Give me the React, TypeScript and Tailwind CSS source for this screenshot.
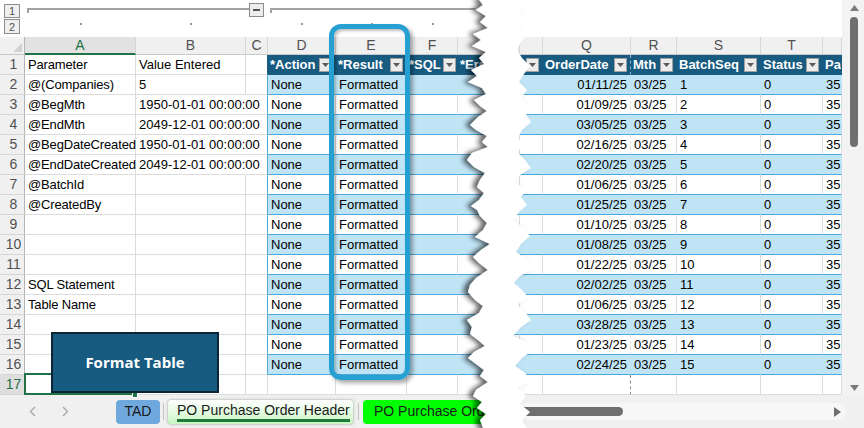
import clsx from "clsx";

type Col = { key: string; w: string; letter: string; dot?: boolean };

const cols: Col[] = [
  { key: "A", w: "w-[111px]", letter: "A", dot: true },
  { key: "B", w: "w-[110px]", letter: "B", dot: true },
  { key: "C", w: "w-[22px]", letter: "C" },
  { key: "D", w: "w-[68px]", letter: "D", dot: true },
  { key: "E", w: "w-[71px]", letter: "E", dot: true },
  { key: "F", w: "w-[51px]", letter: "F", dot: true },
  { key: "G", w: "w-[62px]", letter: "" },
  { key: "P", w: "w-[23px]", letter: "" },
  { key: "Q", w: "w-[88px]", letter: "Q" },
  { key: "R", w: "w-[46px]", letter: "R" },
  { key: "S", w: "w-[84px]", letter: "S" },
  { key: "T", w: "w-[62px]", letter: "T" },
  { key: "U", w: "w-[19px]", letter: "" },
];

const tableKeys = ["D", "E", "F", "G", "P", "Q", "R", "S", "T", "U"];

const headers: Record<string, string> = {
  D: "*Action",
  E: "*Result",
  F: "*SQL",
  G: "*Error",
  P: "i",
  Q: "OrderDate",
  R: "Mth",
  S: "BatchSeq",
  T: "Status",
  U: "Pa",
};

const paramNames = [
  "Parameter",
  "@(Companies)",
  "@BegMth",
  "@EndMth",
  "@BegDateCreated",
  "@EndDateCreated",
  "@BatchId",
  "@CreatedBy",
  "",
  "",
  "",
  "SQL Statement",
  "Table Name",
];

const paramValues = [
  "Value Entered",
  "5",
  "1950-01-01 00:00:00",
  "2049-12-01 00:00:00",
  "1950-01-01 00:00:00",
  "2049-12-01 00:00:00",
];

const orderDates = [
  "01/11/25", "01/09/25", "03/05/25", "02/16/25", "02/20/25",
  "01/06/25", "01/25/25", "01/10/25", "01/08/25", "01/22/25",
  "02/02/25", "01/06/25", "03/28/25", "01/23/25", "02/24/25",
];

// jagged "torn paper" edge, absolute page coords
const tornLeft: [number, number][] = [
  [478, -2], [483, 5], [476, 10], [486, 16], [480, 22], [488, 28], [473, 34], [481, 40],
  [472, 46], [486, 52], [479, 58], [484, 64], [471, 70], [477, 76], [468, 82], [482, 88],
  [486, 94], [474, 100], [480, 106], [487, 111], [478, 117], [470, 125], [476, 130],
  [487, 136], [482, 142], [488, 147], [472, 153], [467, 160], [474, 167], [485, 173],
  [480, 180], [477, 187], [484, 193], [479, 200], [471, 206], [477, 210], [480, 216],
  [487, 223], [483, 230], [475, 237], [490, 244], [481, 250], [473, 257], [479, 263],
  [488, 270], [476, 278], [470, 285], [468, 292], [475, 300], [483, 306], [479, 313],
  [467, 320], [472, 327], [470, 334], [478, 340], [485, 346], [474, 352], [468, 358],
  [476, 364], [484, 370], [480, 376], [488, 382], [476, 390], [473, 396], [482, 402],
  [477, 408], [486, 414], [480, 420], [484, 430],
];
const tornRight: [number, number][] = [
  [528, 430], [522, 420], [530, 412], [520, 404], [526, 396], [519, 388], [531, 380],
  [524, 372], [515, 366], [522, 358], [533, 350], [527, 342], [513, 336], [520, 328],
  [531, 320], [525, 312], [517, 305], [528, 297], [522, 290], [514, 283], [520, 276],
  [535, 268], [528, 260], [516, 252], [521, 244], [530, 236], [524, 228], [513, 220],
  [519, 212], [527, 205], [521, 197], [526, 190], [515, 182], [520, 175], [531, 168],
  [525, 160], [517, 152], [524, 145], [518, 138], [522, 130], [531, 122], [526, 114],
  [530, 106], [521, 98], [527, 90], [519, 82], [524, 74], [530, 66], [522, 58], [517, 50],
  [521, 42], [526, 36], [519, 28], [524, 20], [520, 12], [526, 6], [522, -2],
];
const tornPoints = [...tornLeft, ...tornRight].map(([x, y]) => `${x - 440},${y}`).join(" ");

function Drop() {
  return (
    <span className="shrink-0 w-[13px] h-[14px] bg-[#ececec] border border-[#a0a0a0] flex items-center justify-center">
      <svg width="9" height="6" viewBox="0 0 9 6">
        <path d="M1 1h7L4.5 5z" fill="#5a5a5a" />
      </svg>
    </span>
  );
}

function cellClass(key: string, r: number) {
  const inTable = tableKeys.includes(key) && r <= 16;
  if (inTable) {
    if (r === 1) return "bg-[#175b80] border-r border-b border-[#175b80] text-white font-bold";
    if (r % 2 === 0) return "bg-[#bfe4f5] border-r border-b border-r-[#bfe4f5] border-b-[#4ea8da]";
    return "bg-white border-r border-b border-r-[#dcdcdc] border-b-[#4ea8da]";
  }
  if (key === "C" && r === 1) return "bg-white border-r border-b border-r-[#175b80] border-b-[#dcdcdc]";
  if (key === "C" && r <= 16) return "bg-white border-r border-b border-r-[#4ea8da] border-b-[#dcdcdc]";
  if (key === "B" && r >= 3 && r <= 6) return "bg-white border-r border-b border-r-white border-b-[#dcdcdc] relative z-[1]";
  return "bg-white border-r border-b border-[#dcdcdc]";
}

function cellText(key: string, r: number) {
  if (key === "A") return paramNames[r - 1] ?? "";
  if (key === "B") return paramValues[r - 1] ?? "";
  if (r < 2 || r > 16) return "";
  if (key === "D") return "None";
  if (key === "E") return "Formatted";
  if (key === "Q") return orderDates[r - 2];
  if (key === "R") return "03/25";
  if (key === "S") return String(r - 1);
  if (key === "T") return "0";
  if (key === "U") return "35";
  return "";
}

function Cell({ col, r }: { col: Col; r: number }) {
  const dashed = col.key === "Q";
  if (r === 1 && tableKeys.includes(col.key)) {
    return (
      <div
        className={clsx(
          "h-full shrink-0 flex items-center gap-[2px] pl-[2px] pr-[3px] overflow-hidden text-[13px] leading-[19px]",
          col.w,
          cellClass(col.key, r),
          col.key === "P" ? "justify-end" : "justify-between",
          dashed && "[border-right-style:dashed] border-r-[#8fb3c9]"
        )}
      >
        <span className="whitespace-nowrap">{headers[col.key]}</span>
        {col.key !== "U" && <Drop />}
      </div>
    );
  }
  const text = cellText(col.key, r);
  return (
    <div
      className={clsx(
        "h-full shrink-0 whitespace-nowrap text-[13px] leading-[19px] text-black",
        col.w,
        cellClass(col.key, r),
        col.key === "Q" ? "text-right pr-[3px]" : "pl-[3px]",
        col.key === "A" && "tracking-[-0.15px]",
        col.key === "B" || col.key === "A" ? "overflow-visible" : "overflow-hidden",
        dashed && "[border-right-style:dashed] border-r-[#8a8a8a]",
        col.key === "A" && r === 17 && "relative"
      )}
    >
      {text}
      {col.key === "A" && r === 17 && (
        <>
          <div className="absolute -left-[1px] -top-[2px] right-0 -bottom-[1px] border-2 border-[#217346]" />
          <div className="absolute -right-[3px] -bottom-[4px] w-[6px] h-[6px] bg-[#217346] border border-white" />
        </>
      )}
    </div>
  );
}

function OutlineBtn({ label, className }: { label: string; className?: string }) {
  return (
    <div
      className={clsx(
        "w-[16px] h-[14px] border border-[#8c8c8c] bg-[#efefef] text-[11px] leading-[12px] text-[#555] flex items-center justify-center",
        className
      )}
    >
      {label}
    </div>
  );
}

export default function App() {
  const rows = Array.from({ length: 17 }, (_, i) => i + 1);

  return (
    <div className="relative w-[864px] h-[428px] overflow-hidden bg-white font-['Liberation_Sans',Arial,sans-serif] flex flex-col">
      <div className="flex h-[395px]">
        <div className="w-[842px] flex flex-col">
          {/* outline / grouping bar */}
          <div className="h-[37px] flex bg-white">
            <div className="w-[25px] flex flex-col pl-[4px] pt-[4px]">
              <OutlineBtn label="1" />
              <OutlineBtn label="2" className="h-[15px] mt-px" />
            </div>
            <div className="flex-1 flex flex-col">
              <div className="h-[18px] flex items-start">
                <div className="ml-[2px] mt-[8px] w-[222px] h-[5px] border-t-2 border-l-2 border-[#a3a3a3]" />
                <div className="mt-[3px] w-[15px] h-[14px] border border-[#8c8c8c] bg-[#ededed] flex items-center justify-center">
                  <div className="w-[7px] h-[2px] bg-[#555]" />
                </div>
                <div className="ml-[6px] mt-[8px] w-[205px] h-[5px] border-t-2 border-l-2 border-[#a3a3a3]" />
              </div>
              <div className="h-[19px] flex">
                {cols.slice(0, 6).map((c) => (
                  <div key={c.key} className={clsx("shrink-0 flex justify-center", c.w)}>
                    {c.dot && <div className="mt-[5px] w-[2px] h-[2px] bg-[#9a9a9a]" />}
                  </div>
                ))}
              </div>
            </div>
          </div>

          {/* column letters */}
          <div className="h-[18px] flex bg-[#f0f0f0]">
            <div className="w-[25px] h-full shrink-0 border-r border-b border-r-[#b5b5b5] border-b-[#c8c8c8] relative">
              <svg className="absolute right-[2px] bottom-[2px]" width="9" height="9" viewBox="0 0 9 9">
                <path d="M9 0V9H0z" fill="#d2d2d2" />
              </svg>
            </div>
            {cols.map((c) => (
              <div
                key={c.key}
                className={clsx(
                  "h-full shrink-0 border-r border-r-[#d6d6d6] text-[14px] leading-[17px] text-center",
                  c.w,
                  c.key === "A"
                    ? "bg-[#e2e2e2] text-[#217346] border-b-2 border-b-[#217346]"
                    : "text-[#505050] border-b border-b-[#c8c8c8]"
                )}
              >
                {c.letter}
              </div>
            ))}
          </div>

          {/* rows */}
          {rows.map((r) => (
            <div key={r} className="h-[20px] flex">
              <div
                className={clsx(
                  "w-[25px] h-full shrink-0 border-r border-b border-r-[#b5b5b5] border-b-[#d6d6d6] text-[14px] leading-[19px] text-center pl-[3px]",
                  r === 17 ? "bg-[#dedede] text-[#217346]" : "bg-[#f0f0f0] text-[#505050]"
                )}
              >
                {r}
              </div>
              {cols.map((c) => (
                <Cell key={c.key} col={c} r={r} />
              ))}
            </div>
          ))}
        </div>

        {/* vertical scrollbar */}
        <div className="w-[22px] h-full bg-[#f3f3f3] flex flex-col items-center pl-[2px]">
          <svg className="mt-[5px]" width="9" height="6" viewBox="0 0 9 6">
            <path d="M4.5 0L9 6H0z" fill="#7a7a7a" />
          </svg>
          <div className="mt-[6px] w-[8px] h-[130px] rounded-full bg-[#6f6f6f]" />
          <div className="flex-1" />
          <svg className="mb-[4px]" width="9" height="6" viewBox="0 0 9 6">
            <path d="M0 0H9L4.5 6z" fill="#7a7a7a" />
          </svg>
        </div>
      </div>

      {/* sheet tabs bar */}
      <div className="h-[33px] flex items-center bg-[#f0f0f0]">
        <div className="w-[116px] h-full shrink-0 flex items-center pl-[29px]">
          <svg width="7" height="11" viewBox="0 0 7 11">
            <path d="M6 1L1.5 5.5L6 10" fill="none" stroke="#a8a8a8" strokeWidth="1.4" />
          </svg>
          <svg className="ml-[26px]" width="7" height="11" viewBox="0 0 7 11">
            <path d="M1 1l4.5 4.5L1 10" fill="none" stroke="#a8a8a8" strokeWidth="1.4" />
          </svg>
        </div>
        <div className="w-[394px] h-full shrink-0 flex items-center overflow-hidden">
          <div className="h-[24px] w-[44px] shrink-0 rounded-[4px] bg-[#6fa8dc] text-[14px] text-[#1a1a1a] flex items-center justify-center">
            TAD
          </div>
          <div className="mx-[3px] w-px h-[17px] bg-[#c4c4c4] shrink-0" />
          <div className="h-[26px] w-[187px] shrink-0 rounded-[4px] border border-[#d2d2d2] bg-linear-to-b from-white to-[#c8f6c2] pl-[9px] flex items-center shadow-[0_0_2px_rgba(0,160,0,0.25)]">
            <span className="text-[14px] leading-[17px] text-[#1a1a1a] whitespace-nowrap border-b-[3px] border-[#1f7a3a]">
              PO Purchase Order Header
            </span>
          </div>
          <div className="mx-[4px] w-px h-[17px] bg-[#c4c4c4] shrink-0" />
          <div className="h-[24px] w-[170px] shrink-0 rounded-[4px] bg-[#00ff00] pl-[11px] flex items-center text-[14px] text-[#1a1a1a] whitespace-nowrap">
            PO Purchase Order Detail
          </div>
        </div>
        <div className="flex-1 h-[17px] mr-[18px] rounded-full bg-[#f7f7f7] flex items-center">
          <div className="w-[113px] h-[9px] rounded-full bg-[#6f6f6f]" />
          <div className="flex-1" />
          <svg className="mr-[5px]" width="7" height="10" viewBox="0 0 7 10">
            <path d="M0 0L7 5L0 10z" fill="#6f6f6f" />
          </svg>
        </div>
      </div>

      {/* highlight around the Result column */}
      <div className="absolute left-[329px] top-[24px] w-[81px] h-[356px] rounded-[12px] border-[5px] border-[#26a0d2] shadow-[3px_3px_4px_rgba(0,0,0,0.35),inset_2px_2px_3px_rgba(0,0,0,0.25)]" />

      {/* Format Table button shape */}
      <div className="absolute left-[51px] top-[332px] w-[168px] h-[61px] bg-[#175b80] border-2 border-[#0b2536] flex items-center justify-center">
        <span className="font-['Open_Sans',sans-serif] font-bold text-[15px] text-white">Format Table</span>
      </div>

      {/* torn paper gap */}
      <svg className="absolute left-[440px] top-0" width="110" height="428" viewBox="0 0 110 428">
        <defs>
          <filter id="tornShadow" x="-30%" y="-5%" width="160%" height="110%">
            <feDropShadow dx="-5" dy="0" stdDeviation="2.5" floodColor="#000" floodOpacity="0.6" />
          </filter>
        </defs>
        <polygon points={tornPoints} fill="#fff" filter="url(#tornShadow)" />
      </svg>
    </div>
  );
}
